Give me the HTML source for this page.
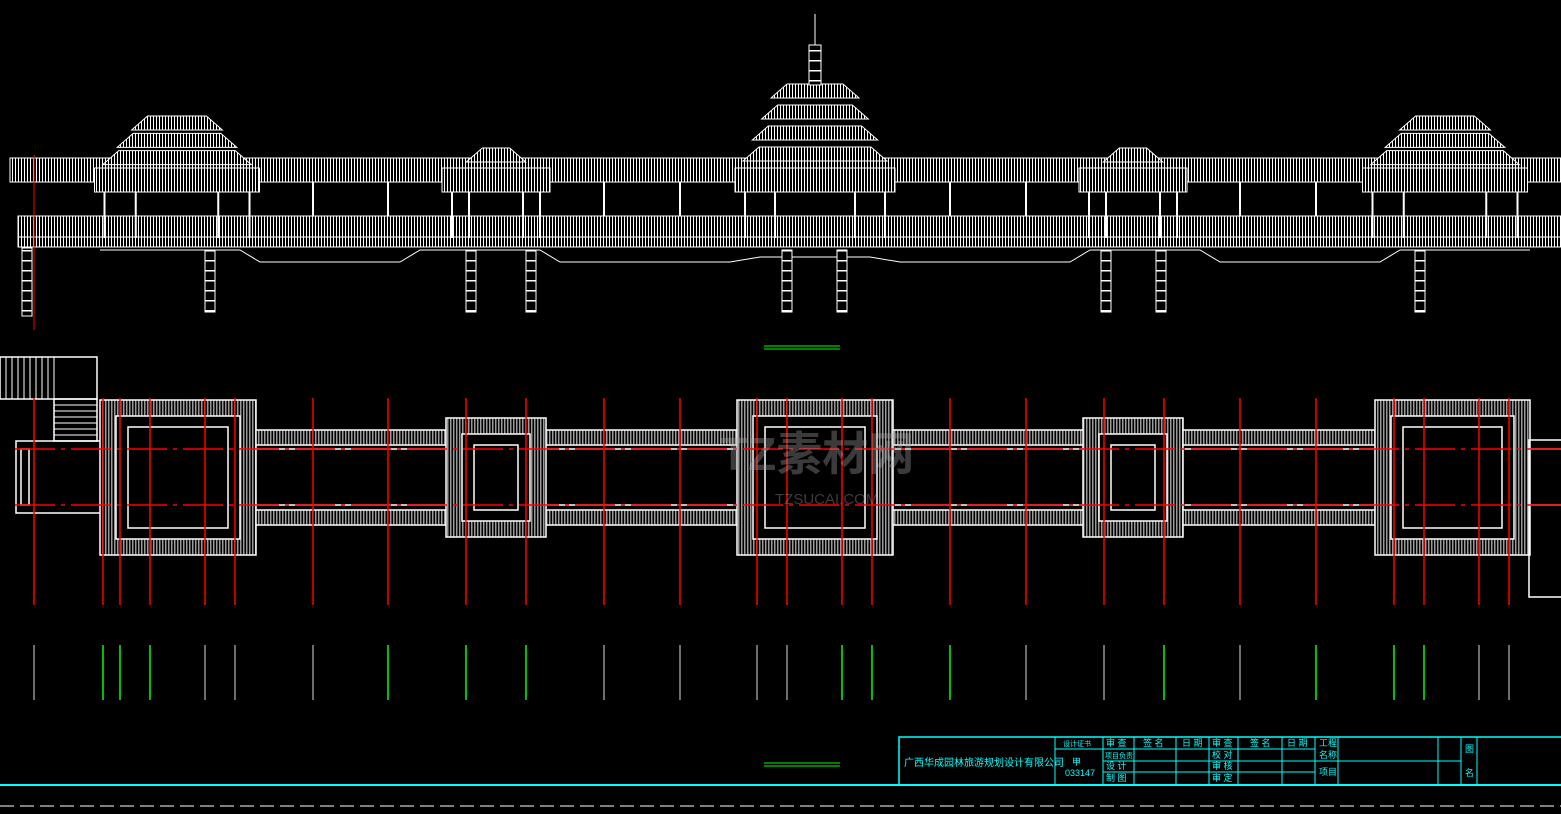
<!DOCTYPE html><html><head><meta charset="utf-8"><style>
html,body{margin:0;padding:0;background:#000;width:1561px;height:814px;overflow:hidden}
svg{display:block}
text{font-family:"Liberation Sans","Noto Sans CJK SC",sans-serif;fill:#0ff}
</style></head><body>
<svg id="s" width="1561" height="814" viewBox="0 0 1561 814" xmlns="http://www.w3.org/2000/svg">
<defs>
<pattern id="v" width="3" height="10" patternUnits="userSpaceOnUse"><rect width="3" height="10" fill="#000"/><rect width="1" height="10" fill="#fff"/></pattern>
<pattern id="h" width="10" height="10" patternUnits="userSpaceOnUse"><rect width="10" height="10" fill="#000"/><rect width="10" height="1.5" fill="#fff"/></pattern>
<pattern id="g" width="3" height="10" patternUnits="userSpaceOnUse"><rect width="3" height="10" fill="#000"/><rect width="1.5" height="10" fill="#999"/></pattern>
</defs>
<g id="el" stroke="#fff" fill="none" stroke-width="1"></g>
<g id="pl" stroke="#fff" fill="none" stroke-width="1.5"></g>
<g id="rd" stroke="#f00" stroke-width="1.5"></g>
<g id="gr" stroke-width="1.5"></g>
<g stroke="#0ff" fill="none" stroke-width="1">
<line x1="0" y1="785" x2="1561" y2="785" stroke-width="2"/>
<rect x="899" y="737" width="670" height="48" stroke-width="1.5"/>
<line x1="1055" y1="737" x2="1055" y2="785"/><line x1="1103" y1="737" x2="1103" y2="785"/>
<line x1="1134" y1="737" x2="1134" y2="785"/><line x1="1176" y1="737" x2="1176" y2="785"/>
<line x1="1209" y1="737" x2="1209" y2="785"/><line x1="1238" y1="737" x2="1238" y2="785"/>
<line x1="1282" y1="737" x2="1282" y2="785"/><line x1="1315" y1="737" x2="1315" y2="785"/>
<line x1="1338" y1="737" x2="1338" y2="785"/><line x1="1438" y1="737" x2="1438" y2="785"/>
<line x1="1461" y1="737" x2="1461" y2="785"/><line x1="1477" y1="737" x2="1477" y2="785"/>
<line x1="1055" y1="749" x2="1315" y2="749"/><line x1="1103" y1="761" x2="1315" y2="761"/>
<line x1="1103" y1="772" x2="1315" y2="772"/><line x1="1315" y1="761" x2="1461" y2="761"/>
<line x1="764" y1="763" x2="840" y2="763" stroke="#0f0"/><line x1="764" y1="766" x2="840" y2="766" stroke="#0f0"/>
<line x1="764" y1="346" x2="840" y2="346" stroke="#0f0"/><line x1="764" y1="349" x2="840" y2="349" stroke="#0f0"/>
<line x1="0" y1="806" x2="1561" y2="806" stroke="#fff" stroke-dasharray="14,6"/>
</g>
<g font-size="9">
<text x="904" y="766" font-size="10">广西华成园林旅游规划设计有限公司</text>
<text x="1063" y="746" font-size="7">设计证书</text>
<text x="1072" y="765">甲</text><text x="1065" y="776">033147</text>
<text x="1106" y="746">审 查</text><text x="1105" y="758" font-size="7">项目负责</text>
<text x="1106" y="769">设 计</text><text x="1106" y="781">制 图</text>
<text x="1143" y="746">签 名</text><text x="1182" y="746">日 期</text>
<text x="1212" y="746">审 查</text><text x="1212" y="758">校 对</text>
<text x="1212" y="769">审 核</text><text x="1212" y="781">审 定</text>
<text x="1250" y="746">签 名</text><text x="1287" y="746">日 期</text>
<text x="1319" y="746">工程</text><text x="1319" y="758">名称</text><text x="1319" y="775">项目</text>
<text x="1465" y="752">图</text><text x="1465" y="776">名</text>
</g>
<g opacity="0.35"><text x="720" y="470" font-size="46" style="fill:#aaa;font-weight:bold">TZ素材网</text>
<text x="775" y="504" font-size="15" style="fill:#aaa">TZSUCAI.COM</text></g>
</svg>
<script>
var NS="http://www.w3.org/2000/svg";
function add(g,tag,a){var e=document.createElementNS(NS,tag);for(var k in a)e.setAttribute(k,a[k]);document.getElementById(g).appendChild(e);return e;}
add("el","rect",{x:10,y:158,width:1551,height:24,fill:"url(#v)"});
add("el","line",{x1:10,y1:182,x2:1561,y2:182});
add("el","rect",{x:18,y:216,width:1543,height:22,fill:"url(#v)"});
add("el","rect",{x:18,y:237,width:1543,height:10,fill:"url(#v)"});
add("el","polyline",{points:"100,250 240,250 260,262 400,262 420,250 540,250 560,262 730,262 760,257 870,257 900,262 1070,262 1090,250 1200,250 1220,262 1380,262 1400,250 1530,250"});
[313,388,604,680,950,1026,1240,1316].forEach(function(x){add("el","line",{x1:x,y1:182,x2:x,y2:216,"stroke-width":2});});
[205,466,526,782,837,1101,1156,1415].forEach(function(x){add("el","rect",{x:x,y:250,width:10,height:62,fill:"url(#h)"});});
function pav(cx,w,top,tiers){
 add("el","rect",{x:cx-w/2,y:168,width:w,height:24,fill:"url(#v)"});
 for(var i=0;i<tiers;i++){var ww=w*(0.55+0.35*(i/Math.max(1,tiers-1)));var y=top+i*((168-top)/tiers);
  add("el","polygon",{points:(cx-ww/2)+","+(y+14)+" "+(cx-ww/2+16)+","+y+" "+(cx+ww/2-16)+","+y+" "+(cx+ww/2)+","+(y+14),fill:"url(#v)"});}
 add("el","line",{x1:cx-w/2+10,y1:192,x2:cx-w/2+10,y2:238,"stroke-width":2});
 add("el","line",{x1:cx+w/2-10,y1:192,x2:cx+w/2-10,y2:238,"stroke-width":2});
 add("el","line",{x1:cx-w/4,y1:192,x2:cx-w/4,y2:238,"stroke-width":2});
 add("el","line",{x1:cx+w/4,y1:192,x2:cx+w/4,y2:238,"stroke-width":2});
}
pav(177,165,116,3);pav(1445,165,116,3);pav(815,160,84,4);pav(496,108,148,1);pav(1133,108,148,1);
add("el","rect",{x:809,y:45,width:12,height:40,fill:"url(#h)"});
add("el","line",{x1:815,y1:14,x2:815,y2:45});
add("el","line",{x1:34,y1:155,x2:34,y2:330,stroke:"#f00"});
add("el","rect",{x:22,y:248,width:10,height:68,fill:"url(#h)"});
add("pl","rect",{x:0,y:357,width:97,height:42});
for(var x=6;x<55;x+=6)add("pl","line",{x1:x,y1:357,x2:x,y2:399,"stroke-width":1});
add("pl","rect",{x:54,y:399,width:43,height:42});
for(var y=405;y<441;y+=6)add("pl","line",{x1:54,y1:y,x2:97,y2:y,"stroke-width":1});
add("pl","rect",{x:16,y:441,width:85,height:72});add("pl","rect",{x:21,y:449,width:8,height:56});
add("pl","rect",{x:240,y:430,width:1150,height:15,fill:"url(#g)"});
add("pl","rect",{x:240,y:510,width:1150,height:15,fill:"url(#g)"});
add("pl","line",{x1:100,y1:449,x2:1561,y2:449});add("pl","line",{x1:100,y1:505,x2:1561,y2:505});
function sq(x,y,w,h){add("pl","rect",{x:x,y:y,width:w,height:h,fill:"url(#g)"});add("pl","rect",{x:x+16,y:y+16,width:w-32,height:h-32,fill:"#000"});add("pl","rect",{x:x+28,y:y+27,width:w-56,height:h-54});}
sq(100,400,156,155);sq(737,400,156,155);sq(1375,400,155,155);sq(446,418,100,119);sq(1083,418,100,119);
add("pl","rect",{x:1529,y:440,width:40,height:157});
[34,103,120,150,205,235,313,388,466,526,604,680,757,787,842,872,950,1026,1104,1164,1240,1316,1394,1424,1479,1509].forEach(function(x){
 add("rd","line",{x1:x,y1:398,x2:x,y2:605});
 var gr=[103,120,150,388,466,526,842,872,950,1164,1316,1394,1424].indexOf(x)>=0;
 add("gr","line",{x1:x,y1:645,x2:x,y2:700,stroke:gr?"#0f0":"#ddd","stroke-width":gr?1.5:1});
});
add("rd","line",{x1:15,y1:505,x2:1561,y2:505,"stroke-dasharray":"40,6,4,6"});
add("rd","line",{x1:15,y1:449,x2:1561,y2:449,"stroke-dasharray":"40,6,4,6"});
</script>
</body></html>
